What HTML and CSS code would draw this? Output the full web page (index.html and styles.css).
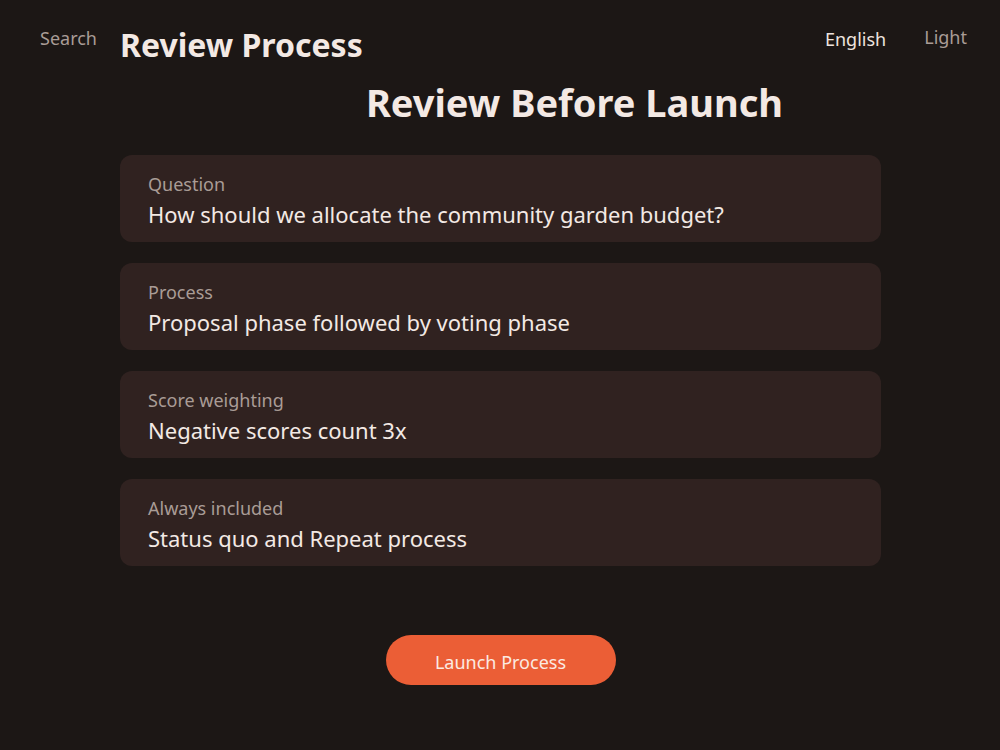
FILE: index.html
```html
<!DOCTYPE html>
<html lang="en">
<head>
<meta charset="utf-8">
<title>Review Process</title>
<link rel="stylesheet" href="styles.css">
</head>
<body>
<header class="topbar">
  <span class="search">Search</span>
  <span class="brand">Review Process</span>
  <span class="spacer"></span>
  <span class="lang">English</span>
  <span class="theme">Light</span>
</header>
<main class="main">
  <h1 class="title">Review Before Launch</h1>
  <section class="cards">
    <div class="card">
      <div class="label">Question</div>
      <div class="value">How should we allocate the community garden budget?</div>
    </div>
    <div class="card">
      <div class="label">Process</div>
      <div class="value">Proposal phase followed by voting phase</div>
    </div>
    <div class="card">
      <div class="label">Score weighting</div>
      <div class="value">Negative scores count 3x</div>
    </div>
    <div class="card">
      <div class="label">Always included</div>
      <div class="value">Status quo and Repeat process</div>
    </div>
  </section>
  <div class="actions">
    <button class="launch">Launch Process</button>
  </div>
</main>
</body>
</html>
```
FILE: styles.css
```css
html, body {
  margin: 0;
  padding: 0;
  background: #1c1715;
  color: #f3e9e4;
  font-family: "Noto Sans", "Open Sans", sans-serif;
  height: 100%;
}
.topbar {
  display: flex;
  align-items: center;
  padding: 19px 33px 0 40px;
  height: 38px;
}
.search {
  font-size: 18px;
  color: #a99c96;
  margin-right: 23px;
}
.brand {
  font-size: 32px;
  font-weight: 700;
  color: #f3e9e4;
  position: relative;
  top: 6px;
}
.spacer { flex: 1; }
.lang {
  font-size: 18px;
  color: #ede3de;
  margin-right: 38px;
  position: relative;
  top: 1px;
}
.theme {
  font-size: 18px;
  color: #a99c96;
  position: relative;
  top: -1px;
}
.main {
  width: 761px;
  margin: 0 auto 0 120px;
}
.title {
  margin: 20px 0 28px 0;
  padding-left: 148px;
  font-size: 38px;
  font-weight: 700;
  line-height: 50px;
  color: #f3e9e4;
  text-align: center;
}
.cards {
  display: flex;
  flex-direction: column;
  gap: 21px;
}
.card {
  background: #302220;
  border-radius: 12px;
  padding: 17px 28px 0 28px;
  height: 70px;
}
.label {
  font-size: 18px;
  line-height: 24px;
  color: #a99c96;
}
.value {
  font-size: 22px;
  line-height: 32px;
  color: #f3e9e4;
  margin-top: 2px;
}
.actions {
  display: flex;
  justify-content: center;
  margin-top: 69px;
}
.launch {
  width: 230px;
  height: 50px;
  border: none;
  border-radius: 25px;
  background: #eb5e36;
  color: #fbeae2;
  font-family: "Noto Sans", "Open Sans", sans-serif;
  font-size: 18px;
  padding: 3px 0 0 0;
  cursor: pointer;
}
```
